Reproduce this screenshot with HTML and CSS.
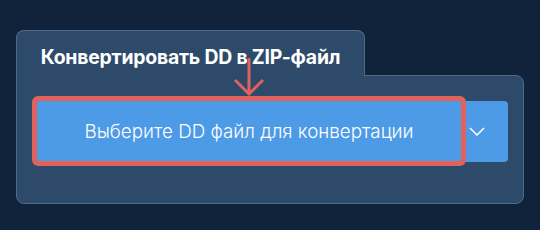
FILE: index.html
```html
<!DOCTYPE html>
<html lang="ru">
<head>
<meta charset="utf-8">
<link rel="stylesheet" href="styles.css">
</head>
<body>
<div class="widget">
  <div class="tab"><span class="tab-title">Конвертировать DD в ZIP-файл</span></div>
  <div class="panel">
    <div class="split">
      <button class="main-btn">Выберите DD файл для конвертации</button>
      <button class="drop-btn" aria-label="Ещё">
        <svg width="16" height="9" viewBox="0 0 16 9"><path d="M1 1 L8 8 L15 1" fill="none" stroke="#fff" stroke-width="1.5"/></svg>
      </button>
    </div>
  </div>
  <svg class="arrow" width="32" height="40" viewBox="0 0 32 40"><path d="M16 0 V36 M2 22 L16 36 L30 22" fill="none" stroke="#e0625c" stroke-width="3"/></svg>
</div>
</body>
</html>
```
FILE: styles.css
```css
html, body {
  margin: 0;
  padding: 0;
  background: #11233a;
  width: 540px;
  height: 230px;
  overflow: hidden;
  font-family: Inter, "Noto Sans", sans-serif;
}
.widget {
  position: relative;
  padding: 30px 16px 0 16px;
  width: 508px;
}
.tab {
  position: relative;
  z-index: 2;
  width: 349px;
  height: 46px;
  box-sizing: border-box;
  background: #2d4a6b;
  border: 1px solid #4d6b8b;
  border-bottom: none;
  border-radius: 8px 8px 0 0;
  margin-bottom: -1px;
  display: flex;
  align-items: center;
  justify-content: center;
  padding-top: 6px;
}
.tab-title {
  color: #fff;
  font-weight: 700;
  font-size: 19.4px;
  letter-spacing: -0.2px;
  white-space: nowrap;
}
.panel {
  background: #2d4a6b;
  border: 1px solid #4d6b8b;
  border-radius: 0 8px 8px 8px;
  height: 129px;
  box-sizing: border-box;
  padding: 25px 15px 0 20px;
}
.split {
  display: flex;
  height: 61px;
}
.main-btn, .drop-btn {
  border: none;
  background: #4d9ae6;
  color: #fff;
  font-family: inherit;
  margin: 0;
  padding: 0;
}
.main-btn {
  width: 424px;
  height: 60px;
  font-size: 18.8px;
  font-weight: 300;
  border-radius: 1px;
  outline: 5px solid #e0625c;
  position: relative;
  z-index: 1;
}
.drop-btn {
  flex: 1;
  border-radius: 0 4px 4px 0;
  display: flex;
  align-items: center;
  padding-left: 8px;
  padding-bottom: 1px;
}
.drop-btn svg { display: block; }
.arrow {
  position: absolute;
  left: 233px;
  top: 58px;
  z-index: 3;
}
```
